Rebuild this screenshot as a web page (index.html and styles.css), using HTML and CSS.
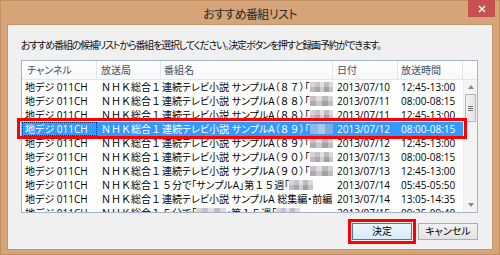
FILE: index.html
```html
<!DOCTYPE html>
<html lang="ja">
<head>
<meta charset="utf-8">
<title>おすすめ番組リスト</title>
<link rel="stylesheet" href="styles.css">
</head>
<body>
<div class="window">
  <div class="titlebar">
    <span class="title">おすすめ番組リスト</span>
    <span class="close"><svg width="8" height="8" viewBox="0 0 8 8"><path d="M1 1L7 7M7 1L1 7" stroke="#fff" stroke-width="1.4"/></svg></span>
  </div>
  <div class="client">
    <p class="instruction">おすすめ番組の候補リストから番組を選択してください。決定ボタンを押すと録画予約ができます。</p>
    <div class="listbox">
      <div class="header">
        <div class="hcell">チャンネル</div>
        <div class="hcell">放送局</div>
        <div class="hcell">番組名</div>
        <div class="hcell">日付</div>
        <div class="hcell">放送時間</div>
        <div class="hcell filler"></div>
      </div>
      <div class="body">
        <div class="rows">
          <div class="row"><span class="c-ch">地デジ 011CH</span><span class="c-st">ＮＨＫ総合１</span><span class="c-pg">連続テレビ小説 サンプルA（<b class="fw">８７</b>）「<i class="blur b1"></i></span><span class="c-dt">2013/07/10</span><span class="c-tm">12:45-13:00</span></div>
          <div class="row"><span class="c-ch">地デジ 011CH</span><span class="c-st">ＮＨＫ総合１</span><span class="c-pg">連続テレビ小説 サンプルA（<b class="fw">８８</b>）「<i class="blur b2"></i></span><span class="c-dt">2013/07/11</span><span class="c-tm">08:00-08:15</span></div>
          <div class="row"><span class="c-ch">地デジ 011CH</span><span class="c-st">ＮＨＫ総合１</span><span class="c-pg">連続テレビ小説 サンプルA（<b class="fw">８８</b>）「<i class="blur b1"></i></span><span class="c-dt">2013/07/11</span><span class="c-tm">12:45-13:00</span></div>
          <div class="row selected"><span class="c-ch focus">地デジ 011CH</span><span class="c-st">ＮＨＫ総合１</span><span class="c-pg">連続テレビ小説 サンプルA（<b class="fw">８９</b>）「<i class="blur b3"></i></span><span class="c-dt">2013/07/12</span><span class="c-tm">08:00-08:15</span></div>
          <div class="row"><span class="c-ch">地デジ 011CH</span><span class="c-st">ＮＨＫ総合１</span><span class="c-pg">連続テレビ小説 サンプルA（<b class="fw">８９</b>）「<i class="blur b2"></i></span><span class="c-dt">2013/07/12</span><span class="c-tm">12:45-13:00</span></div>
          <div class="row"><span class="c-ch">地デジ 011CH</span><span class="c-st">ＮＨＫ総合１</span><span class="c-pg">連続テレビ小説 サンプルA（<b class="fw">９０</b>）「<i class="blur b1"></i></span><span class="c-dt">2013/07/13</span><span class="c-tm">08:00-08:15</span></div>
          <div class="row"><span class="c-ch">地デジ 011CH</span><span class="c-st">ＮＨＫ総合１</span><span class="c-pg">連続テレビ小説 サンプルA（<b class="fw">９０</b>）「<i class="blur b2"></i></span><span class="c-dt">2013/07/13</span><span class="c-tm">12:45-13:00</span></div>
          <div class="row"><span class="c-ch">地デジ 011CH</span><span class="c-st">ＮＨＫ総合１</span><span class="c-pg"><b class="fw">５</b>分で「サンプルA」第<b class="fw">１５</b>週「<i class="blur b1"></i></span><span class="c-dt">2013/07/14</span><span class="c-tm">05:45-05:50</span></div>
          <div class="row"><span class="c-ch">地デジ 011CH</span><span class="c-st">ＮＨＫ総合１</span><span class="c-pg">連続テレビ小説 サンプルA 総集編・前編「<i class="blur b4"></i></span><span class="c-dt">2013/07/14</span><span class="c-tm">13:05-14:35</span></div>
          <div class="row"><span class="c-ch">地デジ 011CH</span><span class="c-st">ＮＨＫ総合１</span><span class="c-pg"><b class="fw">５</b>分で「<i class="blur b3"></i>」第<b class="fw">１５</b>週「<i class="blur b1"></i></span><span class="c-dt">2013/07/15</span><span class="c-tm">09:25-09:40</span></div>
        </div>
        <div class="scrollbar">
          <div class="sb-btn"><svg width="6" height="4" viewBox="0 0 6 4"><path d="M0 4L3 0L6 4Z" fill="#8a8a8a"/></svg></div>
          <div class="sb-thumb"><span class="grip"></span><span class="grip"></span><span class="grip"></span></div>
          <div class="sb-track"></div>
          <div class="sb-btn"><svg width="6" height="4" viewBox="0 0 6 4"><path d="M0 0L3 4L6 0Z" fill="#8a8a8a"/></svg></div>
        </div>
      </div>
      <div class="callout"></div>
    </div>
    <div class="buttons">
      <button class="btn default">決定</button>
      <button class="btn">キャンセル</button>
    </div>
  </div>
</div>
</body>
</html>
```
FILE: styles.css
```css
* { box-sizing: border-box; }
html, body { margin: 0; padding: 0; }
body {
  width: 500px;
  height: 255px;
  overflow: hidden;
  font-family: "Open Sans", "Noto Sans CJK JP", sans-serif;
  font-size: 10px;
  font-feature-settings: "palt";
  color: #000;
  background: #d4a274;
}
.window {
  width: 500px;
  height: 255px;
  background: #d5a478;
  border: 1px solid #c18f62;
  padding: 0 6px 4px 6px;
  display: flex;
  flex-direction: column;
}
.titlebar {
  height: 23px;
  flex: none;
  display: grid;
  grid-template-columns: 1fr auto 1fr;
}
.title {
  grid-column: 2;
  align-self: center;
  padding-top: 2px;
  font-size: 12px;
  letter-spacing: -0.6px;
  color: #2a2a2a;
  font-family: "Noto Sans CJK JP", sans-serif;
}
.close {
  grid-column: 3;
  justify-self: end;
  align-self: start;
  width: 27px;
  height: 17px;
  margin: -1px -2px 0 0;
  background: #c75050;
  display: flex;
  align-items: center;
  justify-content: center;
}
.client {
  flex: 1;
  background: #f0f0f0;
  border: 1px solid #c49670;
  padding: 13px 14px 0 13px;
  display: flex;
  flex-direction: column;
}
.instruction {
  margin: 0 0 8px 0;
  line-height: 14px;
  white-space: nowrap;
  letter-spacing: -1.15px;
  color: #111;
}
.listbox {
  position: relative;
  height: 153px;
  flex: none;
  border: 1px solid #a3b4cb;
  background: #fff;
  display: flex;
  flex-direction: column;
}
.header {
  height: 19px;
  flex: none;
  display: grid;
  grid-template-columns: 75px 64px 172px 65px 65px 1fr;
  background: linear-gradient(#ffffff, #f7f8fa);
  border-bottom: 1px solid #e5e5e5;
}
.hcell {
  border-right: 1px solid #e3e5e8;
  line-height: 18px;
  padding-left: 4px;
  color: #3f4d60;
  white-space: nowrap;
  overflow: hidden;
}
.hcell:first-child { padding-left: 5px; }
.hcell:nth-child(3) { padding-left: 3px; }
.hcell:nth-child(5) { padding-left: 3px; }
.hcell.filler { border-right: none; }
.body {
  flex: 1;
  min-height: 0;
  display: flex;
  overflow: hidden;
}
.rows {
  width: 441px;
  flex: none;
}
.row {
  display: grid;
  grid-template-columns: 75px 64px 172px 65px 65px;
  height: 14px;
  line-height: 14px;
  white-space: nowrap;
}
.row > span { overflow: hidden; }
.c-ch { padding-left: 3px; }
.c-st { padding-left: 4px; font-feature-settings: normal; }
.c-pg { padding-left: 1px; }
.c-dt { padding-left: 4px; }
.c-tm { padding-left: 3px; }
.fw {
  font-weight: normal;
  font-feature-settings: normal;
}
.row.selected {
  background: #3399ff;
  color: #fff;
}
.row.selected .focus {
  border: 1px dotted #0d2f5c;
  padding-left: 2px;
  line-height: 12px;
}
.blur {
  display: inline-block;
  width: 24px;
  height: 10px;
  vertical-align: -1px;
  background:
    linear-gradient(180deg, rgba(255,255,255,0.25) 0 50%, rgba(0,0,0,0.04) 50% 100%),
    linear-gradient(90deg, #c9c3c9 0 20%, #b3adb5 20% 40%, #dad6da 40% 60%, #aaa4ac 60% 80%, #d1ccd1 80% 100%);
}
.b2 {
  background:
    linear-gradient(180deg, rgba(255,255,255,0.2) 0 50%, rgba(0,0,0,0.05) 50% 100%),
    linear-gradient(90deg, #b8b2ba 0 25%, #d6d1d6 25% 50%, #aea8b0 50% 75%, #cbc6cb 75% 100%);
}
.b3 { width: 30px; }
.b4 { width: 10px; }
.selected .blur {
  background: linear-gradient(90deg, #8fb8e6 0 25%, #a9c8ea 25% 50%, #80acde 50% 75%, #9fc2ea 75% 100%);
}
.scrollbar {
  width: 14px;
  flex: none;
  background: #f3f3f3;
  border-left: 1px solid #ececec;
  display: flex;
  flex-direction: column;
}
.sb-btn {
  height: 14px;
  flex: none;
  display: flex;
  align-items: center;
  justify-content: center;
}
.sb-thumb {
  height: 28px;
  flex: none;
  margin: 0 1px;
  border: 1px solid #b8b8b8;
  background: linear-gradient(90deg, #f2f2f2, #e4e4e4);
  display: flex;
  flex-direction: column;
  align-items: center;
  justify-content: center;
  gap: 1px;
}
.grip {
  width: 5px;
  height: 1px;
  background: #707070;
}
.sb-track { flex: 1; }
.callout {
  position: absolute;
  left: -5px;
  top: 57px;
  width: 450px;
  height: 21px;
  border: 3px solid #f00;
  pointer-events: none;
}
.buttons {
  margin-top: 10px;
  display: flex;
  justify-content: flex-end;
  gap: 6px;
}
.btn {
  width: 60px;
  height: 17px;
  padding: 0;
  font-family: "Open Sans", "Noto Sans CJK JP", sans-serif;
  font-size: 10px;
  font-feature-settings: "palt";
  line-height: 15px;
  color: #000;
  border: 1px solid #acacac;
  background: linear-gradient(#f2f2f2, #e3e3e3);
}
.btn.default {
  border-color: #3c7fb1;
  background: linear-gradient(#eaf5fd, #d7ebfa);
  outline: 3px solid #f00;
  outline-offset: 1px;
}
```
